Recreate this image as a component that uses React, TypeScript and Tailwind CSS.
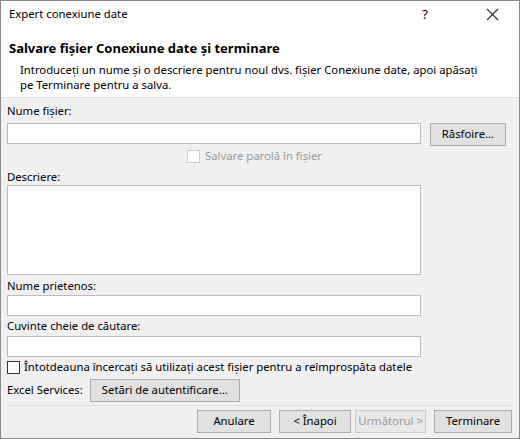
const FONT = "font-['Segoe_UI','Noto_Sans',sans-serif]";

function Btn({ label, disabled, className = "" }: { label: string; disabled?: boolean; className?: string }) {
  return (
    <button
      type="button"
      className={`flex h-[23px] shrink-0 items-center justify-center border text-[11.3px] ${
        disabled ? "border-[#cccccc] bg-[#e8e8e8] text-[#9a9a9a]" : "border-[#adadad] bg-[#e1e1e1] text-black"
      } ${className}`}
    >
      {label}
    </button>
  );
}

function Field({ className = "" }: { className?: string }) {
  return <div className={`w-[414px] shrink-0 border border-[#bdbdbd] bg-white ${className}`} />;
}

function Box({ disabled }: { disabled?: boolean }) {
  return (
    <span
      className={`inline-block h-[13px] w-[13px] shrink-0 border bg-white ${disabled ? "border-[#cccccc]" : "border-[#333333]"}`}
    />
  );
}

export default function App() {
  return (
    <div className={`${FONT} flex h-[439px] w-[520px] flex-col overflow-hidden border border-[#8a8a8a] text-[11.3px] text-black`}>
      {/* white wizard header */}
      <div className="border-b border-[#dfdfdf] bg-white">
        <div className="flex h-[26px] items-center pl-[8px]">
          <span className="flex-1 text-[11.3px]">Expert conexiune date</span>
          <span className="w-[12px] text-center text-[13px] leading-none">?</span>
          <span className="ml-[54px] mr-[20px] flex h-[14px] w-[14px] items-center justify-center">
            <svg width="13" height="13" viewBox="0 0 13 13" fill="none" stroke="#333" strokeWidth="1.1">
              <path d="M1 1 L12 12 M12 1 L1 12" />
            </svg>
          </span>
        </div>
        <div className="pl-[8px] pt-[12px] text-[13px] font-bold leading-[18px]">
          Salvare fișier Conexiune date și terminare
        </div>
        <div className="pb-[5px] pl-[19px] pr-[20px] pt-[5px] leading-[15px]">
          Introduceți un nume și o descriere pentru noul dvs. fișier Conexiune date, apoi apăsați
          <br />
          pe Terminare pentru a salva.
        </div>
      </div>

      {/* gray body */}
      <div className="flex flex-1 flex-col bg-[#f0f0f0] px-[6px]">
        <div className="mt-[5px] leading-[16px]">Nume fișier:</div>
        <div className="mt-[4px] flex items-start gap-[9px]">
          <Field className="h-[21px]" />
          <Btn label="Răsfoire..." className="w-[76px]" />
        </div>
        <div className="mt-[2px] flex items-center gap-[5px] pl-[180px] text-[#9a9a9a]">
          <Box disabled />
          <span className="leading-[16px]">Salvare parolă în fișier</span>
        </div>
        <div className="mt-[5px] leading-[16px]">Descriere:</div>
        <Field className="h-[90px]" />
        <div className="mt-[3px] leading-[16px]">Nume prietenos:</div>
        <Field className="mt-[1px] h-[21px]" />
        <div className="mt-[2px] leading-[16px]">Cuvinte cheie de căutare:</div>
        <Field className="mt-[2px] h-[21px]" />
        <div className="mt-[2px] flex items-center gap-[4px]">
          <Box />
          <span className="leading-[16px]">Întotdeauna încercați să utilizați acest fișier pentru a reîmprospăta datele</span>
        </div>
        <div className="mt-[4px] flex items-center gap-[7px]">
          <span>Excel Services:</span>
          <Btn label="Setări de autentificare..." className="w-[150px]" />
        </div>
        <div className="mt-[3px] border-t border-[#dfdfdf]" />
        <div className="mt-[4px] flex justify-end pr-[1px]">
          <Btn label="Anulare" className="w-[74px]" />
          <Btn label="< Înapoi" className="ml-[8px] w-[72px]" />
          <Btn label="Următorul >" disabled className="ml-[4px] w-[71px]" />
          <Btn label="Terminare" className="ml-[8px] w-[78px]" />
        </div>
      </div>
    </div>
  );
}
